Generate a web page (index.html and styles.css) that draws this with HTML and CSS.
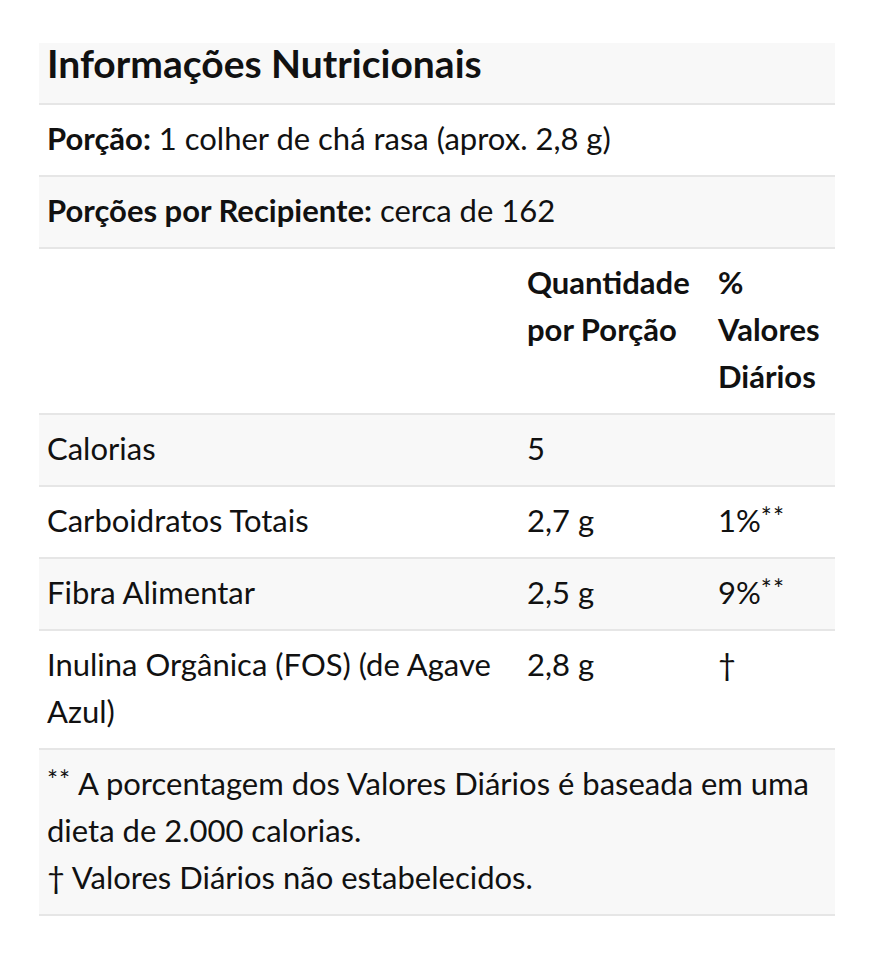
FILE: index.html
```html
<!DOCTYPE html>
<html lang="pt">
<head>
<meta charset="utf-8">
<link rel="stylesheet" href="styles.css">
</head>
<body>
<table class="nutri">
  <colgroup>
    <col class="c1"><col class="c2"><col class="c3">
  </colgroup>
  <tr class="alt title-row"><td colspan="3"><h2 class="title">Informações Nutricionais</h2></td></tr>
  <tr><td colspan="3"><b>Porção:</b> 1 colher de chá rasa (aprox. 2,8 g)</td></tr>
  <tr class="alt"><td colspan="3"><b>Porções por Recipiente:</b> cerca de 162</td></tr>
  <tr class="head"><td></td><td><b>Quantidade por Porção</b></td><td><b>% Valores Diários</b></td></tr>
  <tr class="alt"><td>Calorias</td><td>5</td><td></td></tr>
  <tr><td>Carboidratos Totais</td><td>2,7 g</td><td>1%<sup>**</sup></td></tr>
  <tr class="alt"><td>Fibra Alimentar</td><td>2,5 g</td><td>9%<sup>**</sup></td></tr>
  <tr><td>Inulina Orgânica (FOS) (de Agave Azul)</td><td>2,8 g</td><td>†</td></tr>
  <tr class="alt"><td colspan="3"><sup>**</sup> A porcentagem dos Valores Diários é baseada em uma dieta de 2.000 calorias.<br>† Valores Diários não estabelecidos.</td></tr>
</table>
</body>
</html>
```
FILE: styles.css
```css
html, body {
  margin: 0;
  background: #ffffff;
}
body {
  padding: 43px 39px 0 39px;
  font-family: Lato, "Noto Sans", sans-serif;
  color: #111111;
}
.nutri {
  width: 796px;
  border-collapse: collapse;
  font-size: 31px;
  line-height: 47px;
}
.c1 { width: 480px; }
.c2 { width: 191px; }
.c3 { width: 125px; }
.nutri td {
  padding: 10px 8px 13px 8px;
  border-bottom: 2px solid #e6e6e6;
  vertical-align: top;
  text-align: left;
}
.nutri tr.alt td {
  background: #f8f8f8;
}
.nutri tr.title-row td {
  padding: 0 8px 20px 8px;
}
.title {
  margin: 0;
  font-size: 39px;
  line-height: 40px;
  font-weight: 700;
}
b { font-weight: 700; }
sup {
  font-size: 26px;
  line-height: 0;
  letter-spacing: 1px;
  vertical-align: 5px;
}
```
